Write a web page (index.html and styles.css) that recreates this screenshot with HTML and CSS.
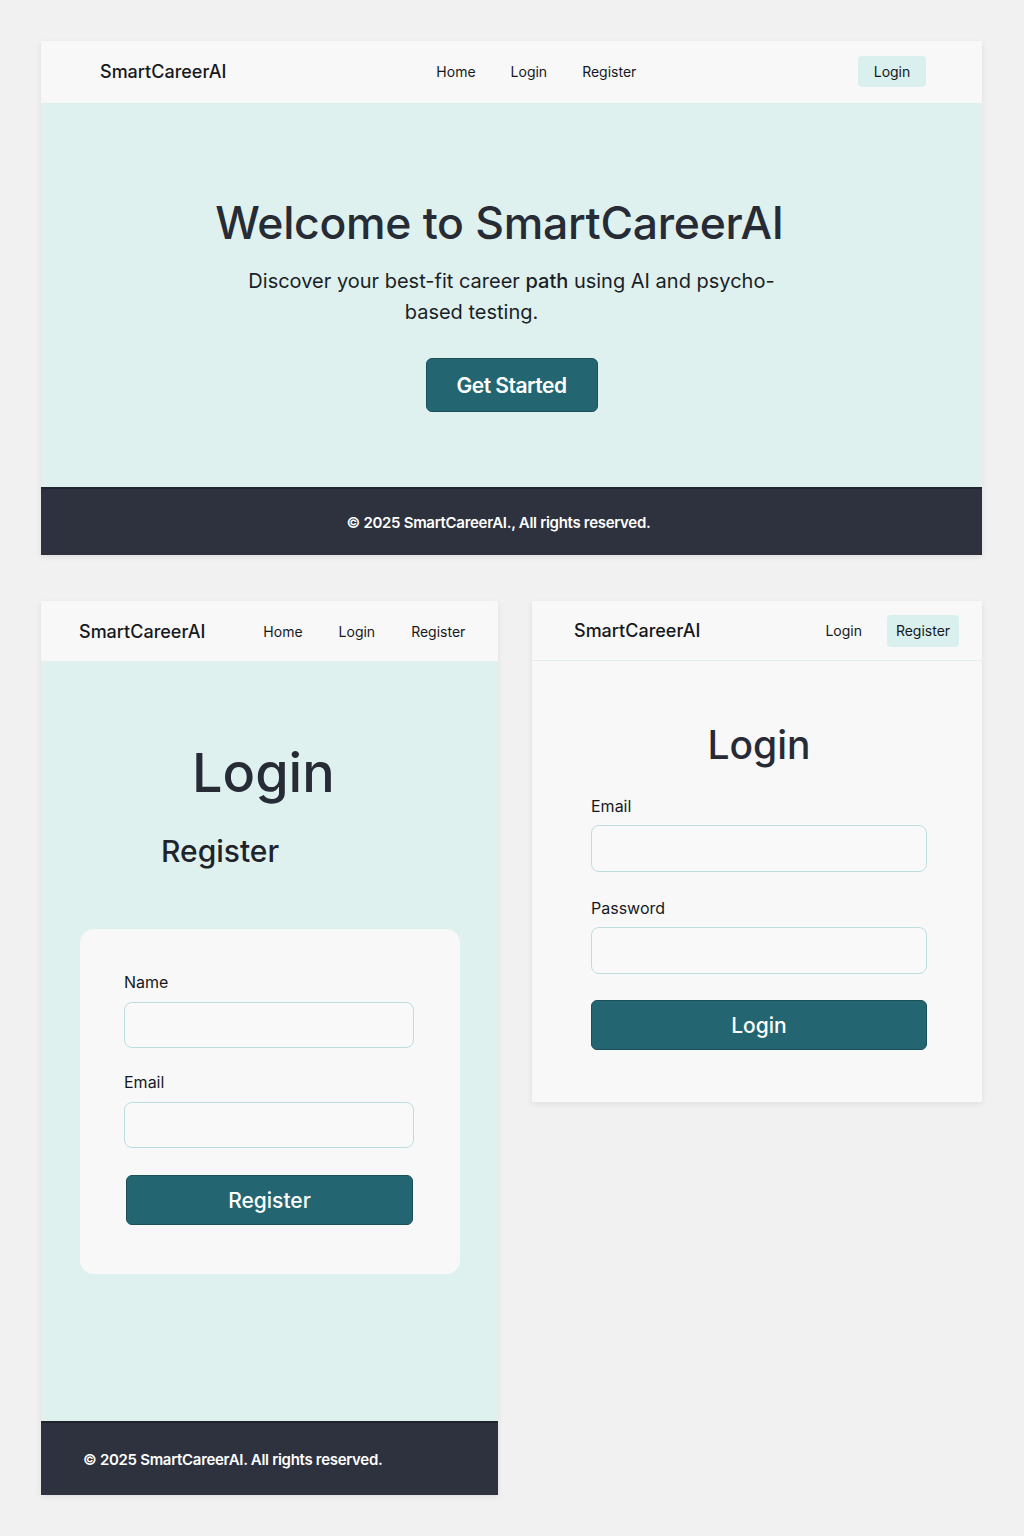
FILE: index.html
```html
<!DOCTYPE html>
<html lang="en">
<head>
<meta charset="utf-8">
<title>SmartCareerAI</title>
<link rel="stylesheet" href="styles.css">
</head>
<body>
<div class="page">
  <section class="panel panel-home">
    <header class="nav nav-home">
      <div class="logo">SmartCareerAI</div>
      <nav class="links">
        <a>Home</a><a>Login</a><a>Register</a>
      </nav>
      <a class="pill">Login</a>
    </header>
    <div class="hero">
      <h1 class="hero-title">Welcome to SmartCareerAI</h1>
      <p class="hero-sub"><span class="l1">Discover your best-fit career <b>path</b> using AI and psycho-</span><span class="l2">based testing.</span></p>
      <button class="btn btn-start">Get Started</button>
    </div>
    <footer class="foot foot-center">© 2025 SmartCareerAI., All rights reserved.</footer>
  </section>

  <div class="row">
    <section class="panel panel-reg">
      <header class="nav nav-reg">
        <div class="logo">SmartCareerAI</div>
        <nav class="links links-reg">
          <a>Home</a><a>Login</a><a>Register</a>
        </nav>
      </header>
      <div class="reg-body">
        <h2 class="big-login">Login</h2>
        <h3 class="reg-title">Register</h3>
        <form class="card">
          <label class="lbl">Name</label>
          <div class="field"></div>
          <label class="lbl">Email</label>
          <div class="field"></div>
          <button class="btn btn-form" type="button">Register</button>
        </form>
      </div>
      <footer class="foot foot-left">© 2025 SmartCareerAI. All rights reserved.</footer>
    </section>

    <section class="panel panel-login">
      <header class="nav nav-login">
        <div class="logo">SmartCareerAI</div>
        <nav class="links links-login">
          <a>Login</a><a class="pill">Register</a>
        </nav>
      </header>
      <div class="login-body">
        <h2 class="login-title">Login</h2>
        <label class="lbl">Email</label>
        <div class="field"></div>
        <label class="lbl">Password</label>
        <div class="field"></div>
        <button class="btn btn-form btn-login" type="button">Login</button>
      </div>
    </section>
  </div>
</div>
</body>
</html>
```
FILE: styles.css
```css
* { box-sizing: border-box; }
html, body { margin: 0; padding: 0; }
body {
  background: #f1f1f1;
  font-family: Inter, "Noto Sans", "Liberation Sans", sans-serif;
  color: #1c1f26;
}
.page {
  padding: 41px 42px 40px 41px;
  display: flex;
  flex-direction: column;
  gap: 46px;
}
.panel {
  background: #f8f8f8;
  box-shadow: 0 2px 6px rgba(0,0,0,0.08);
  display: flex;
  flex-direction: column;
}
.panel-home { width: 941px; height: 514px; }

.nav {
  display: flex;
  align-items: center;
  background: #f8f8f8;
}
.logo {
  font-size: 18px;
  font-weight: 500;
  color: #16181d;
  letter-spacing: 0;
}
.links { display: flex; align-items: center; }
.links a { font-size: 14px; color: #16181d; }
.pill {
  background: #d9f0ee;
  border-radius: 4px;
  font-size: 14px;
  color: #16181d;
  display: inline-flex;
  align-items: center;
  justify-content: center;
}

.nav-home { height: 62px; padding: 0 56px 0 59px; }
.nav-home .links { margin-left: 210px; gap: 35px; }
.nav-home .pill { margin-left: auto; width: 68px; height: 31px; margin-top: -1px; }
.nav-home .links, .nav-home .logo { margin-top: -2px; }

.hero {
  flex: 1;
  background: #def1ef;
  display: flex;
  flex-direction: column;
  align-items: center;
  padding-top: 94px;
}
.hero-title {
  margin: 0 24px 0 0;
  font-size: 44.5px;
  line-height: 53px;
  font-weight: 500;
  color: #262b35;
  letter-spacing: -0.3px;
}
.hero-sub {
  margin: 16px 0 0;
  font-size: 20px;
  line-height: 31px;
  color: #1b1e25;
  text-align: center;
}
.hero-sub b { font-weight: 500; }
.hero-sub span { display: block; }
.hero-sub .l2 { padding-right: 80px; }
.btn {
  background: #236672;
  border: 1px solid #1b4f5a;
  color: #fff;
  font-family: inherit;
  font-weight: 600;
  border-radius: 6px;
  cursor: pointer;
}
.btn-start {
  margin-top: 30px;
  width: 172px;
  height: 54px;
  font-size: 21px;
  letter-spacing: -0.5px;
}

.foot {
  background: #2e323e;
  color: #fff;
  font-size: 15px;
  font-weight: 600;
  display: flex;
  align-items: center;
  letter-spacing: -0.3px;
}
.foot-center { height: 68px; justify-content: center; padding-right: 26px; border-top: 2px solid #22252e; }
.foot-left { height: 74px; padding-left: 42px; border-top: 2px solid #22252e; }

.row {
  display: flex;
  gap: 34px;
  align-items: flex-start;
}
.panel-reg { width: 457px; height: 894px; }
.nav-reg { height: 60px; padding-left: 38px; }
.links-reg { margin-left: 58px; gap: 36px; }

.reg-body {
  flex: 1;
  background: #def1ef;
  padding: 80px 38px 0 39px;
}
.big-login {
  margin: 0;
  padding-left: 112px;
  font-size: 54px;
  line-height: 64px;
  font-weight: 500;
  color: #262b35;
}
.reg-title {
  margin: 28px 0 0;
  padding-left: 81px;
  font-size: 30px;
  line-height: 36px;
  font-weight: 500;
  color: #1f232b;
}
.card {
  margin-top: 60px;
  background: #f8f8f8;
  border-radius: 14px;
  height: 345px;
  padding: 43px 46px 0 44px;
  display: flex;
  flex-direction: column;
}
.lbl {
  display: block;
  font-size: 16px;
  line-height: 20px;
  color: #16181d;
}
.field {
  margin-top: 10px;
  height: 46px;
  border: 1px solid #bcdede;
  border-radius: 8px;
  background: #f9f9f9;
}
.card .field + .lbl { margin-top: 24px; }
.btn-form {
  margin-top: 27px;
  height: 50px;
  width: 100%;
  font-size: 21px;
  font-weight: 500;
}
.card .btn-form { margin-left: 2px; width: 287px; }

.panel-login { width: 450px; height: 501px; }
.nav-login {
  height: 60px;
  padding: 0 23px 0 42px;
  border-bottom: 1px solid #e3ecec;
  justify-content: space-between;
}
.links-login { gap: 25px; }
.links-login .pill { width: 72px; height: 32px; font-size: 14px; }

.login-body {
  padding: 59px 55px 0 59px;
}
.login-title {
  margin: 0 0 26px;
  text-align: center;
  font-size: 39px;
  line-height: 50px;
  font-weight: 500;
  color: #262b35;
}
.login-body .field { margin-top: 9px; height: 47px; }
.login-body .field + .lbl { margin-top: 26px; }
.btn-login { margin-top: 26px; }
```
